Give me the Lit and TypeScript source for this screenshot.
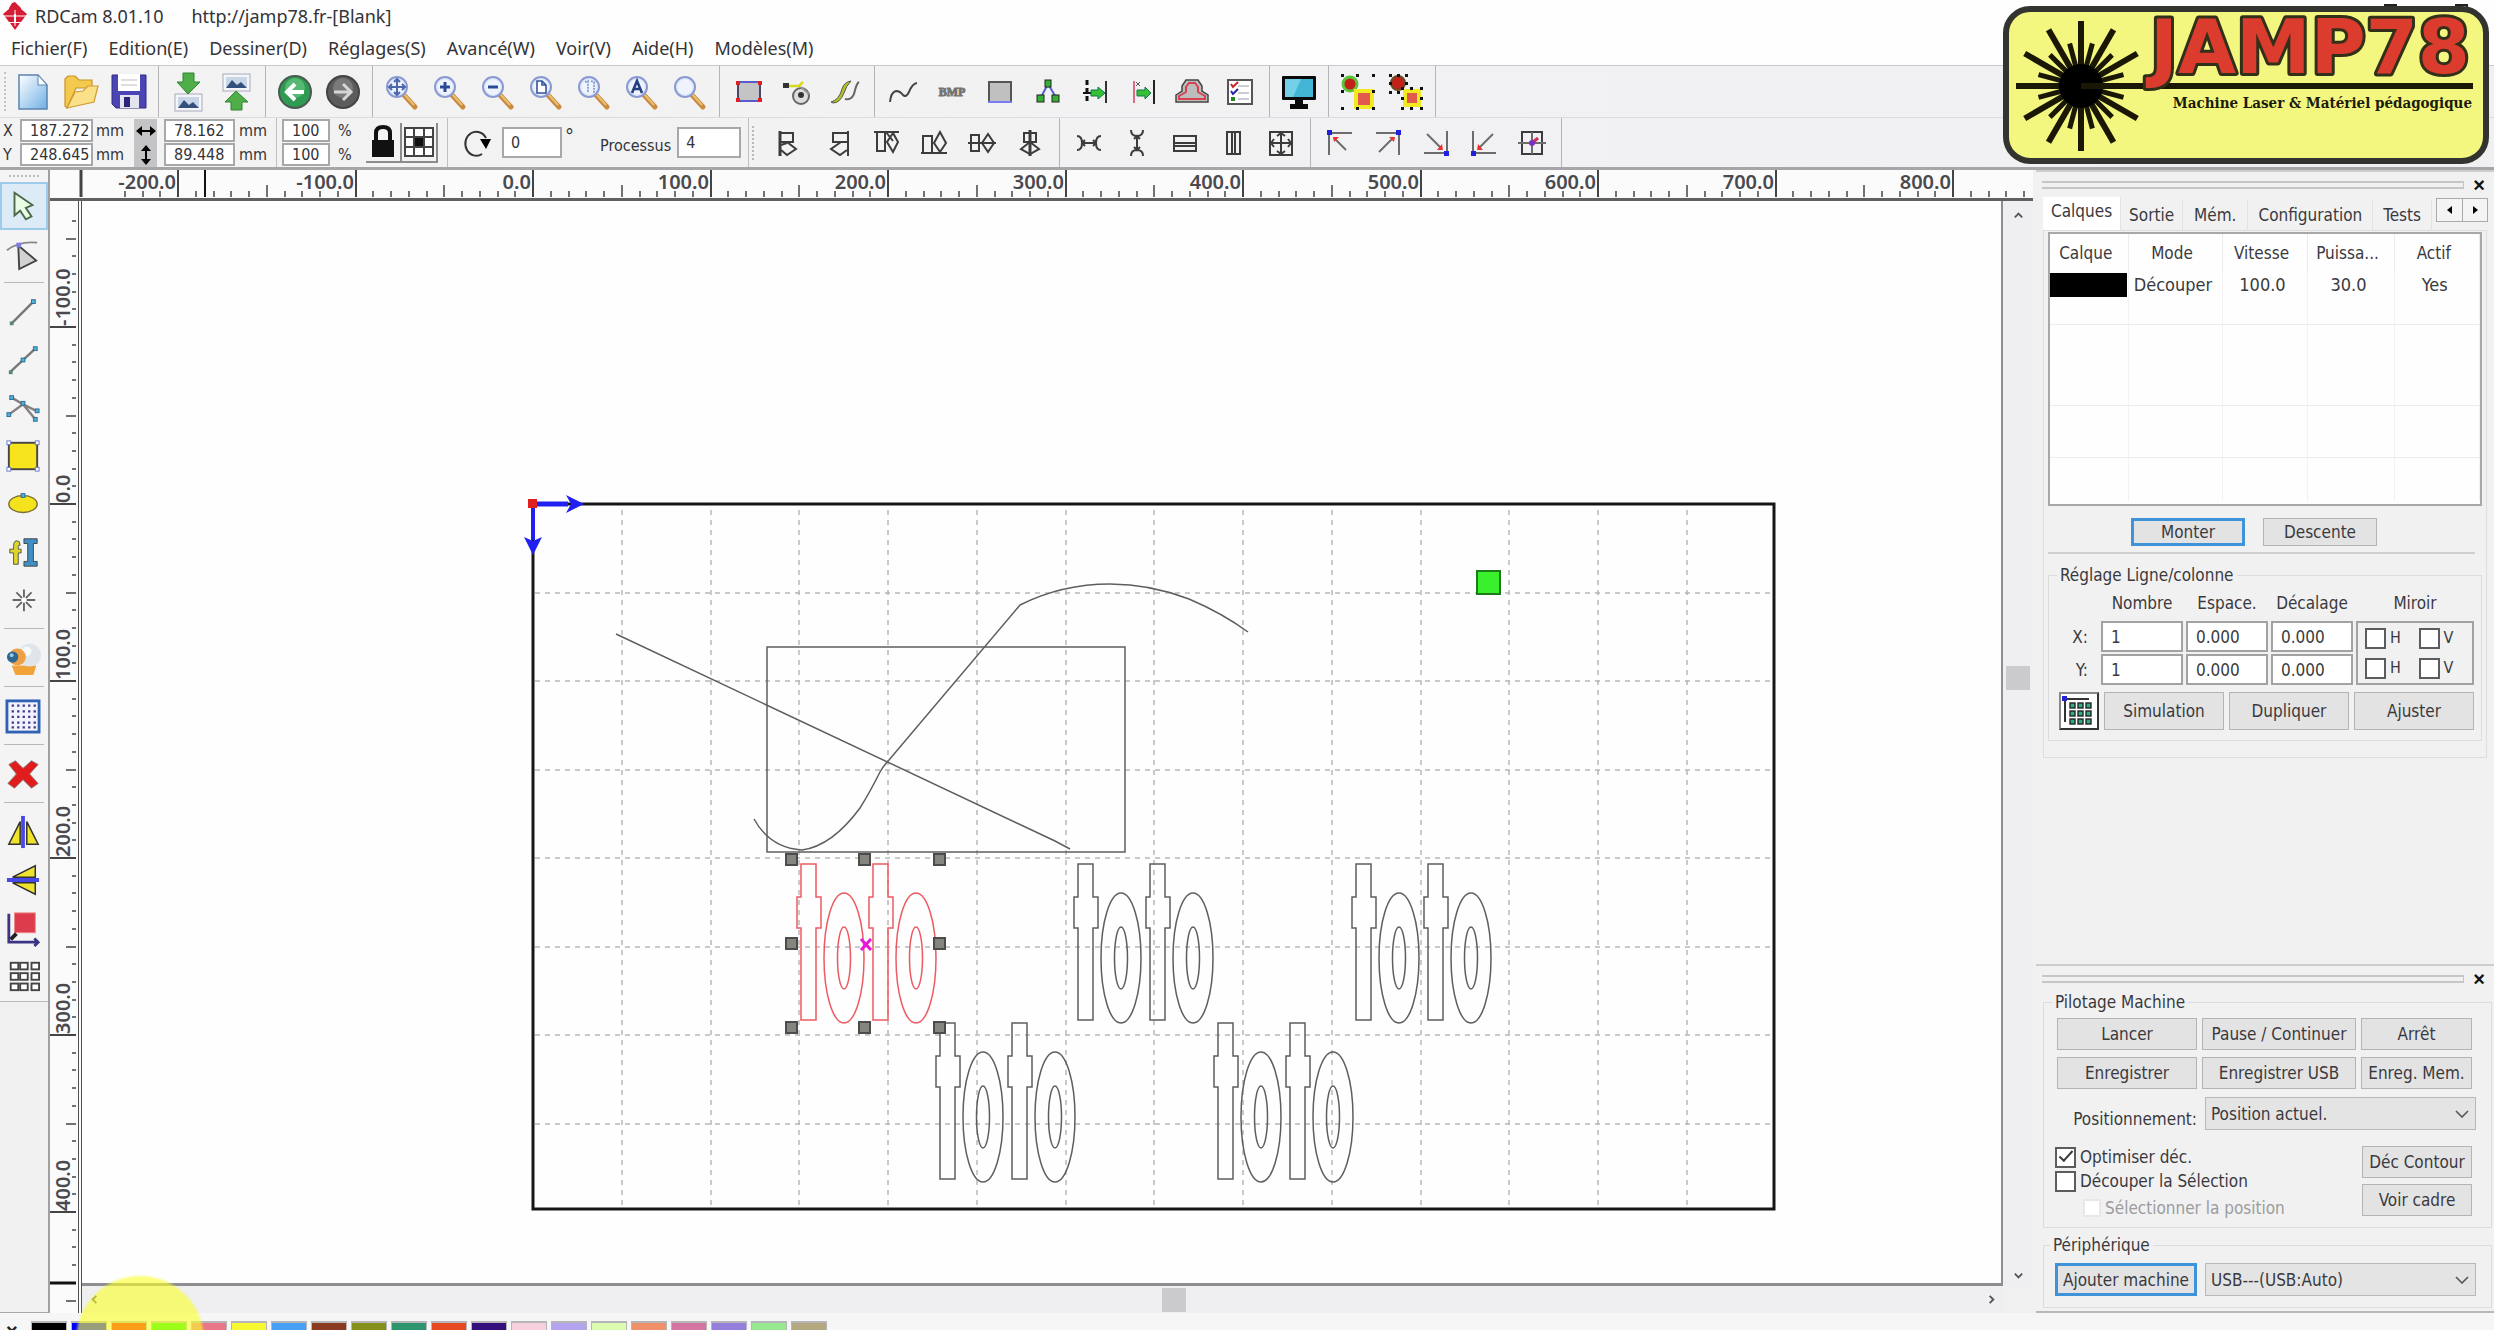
import { LitElement, html, svg, css, nothing } from "lit";
import type { SVGTemplateResult } from "lit";
import { customElement } from "lit/decorators.js";

type Art = SVGTemplateResult;
interface Tool {
  name: string;
  art: Art;
}

const glass = (inner: Art | typeof nothing) => svg`
  <path d="M20 21 L31 33" stroke="#c98a3c" stroke-width="5" stroke-linecap="round"/>
  <path d="M20 20 L30 31" stroke="#e8c07a" stroke-width="2"/>
  <circle cx="13" cy="13" r="10" fill="#dfe8fb" stroke="#8a9ad0" stroke-width="2"/>
  <circle cx="13" cy="13" r="7.5" fill="#eef3fd"/>${inner}`;

const fileTools: Tool[] = [
  {
    name: "Nouveau",
    art: svg`<defs><linearGradient id="pg" x1="0" y1="0" x2="1" y2="1"><stop offset="0" stop-color="#fff"/><stop offset="1" stop-color="#6fb0e6"/></linearGradient></defs>
      <path d="M4 1 H23 L32 11 V35 H4 Z" fill="url(#pg)" stroke="#5b84ad" stroke-width="1.5"/><path d="M23 1 V11 H32 Z" fill="#fff" stroke="#5b84ad"/>`,
  },
  {
    name: "Ouvrir",
    art: svg`<path d="M2 5 L5 2 H12 L16 6 H29 V14 H13 L4 34 L2 32 Z" fill="#f3c94e" stroke="#c8952a" stroke-width="1.2"/>
      <path d="M4 34 L12 18 L20 17 L25 12 H35 L31 28 Z" fill="#fbe08a" stroke="#d09c30" stroke-width="1.2"/>`,
  },
  {
    name: "Enregistrer",
    art: svg`<path d="M1 1 H35 V34 H5 L1 30 Z" fill="#4a44b4" stroke="#302a86"/><rect x="7" y="0" width="22" height="17" fill="#fff"/>
      <path d="M10 6 H26 M10 11 H26" stroke="#bbb"/><rect x="9" y="21" width="19" height="13" fill="#e4e4ee"/><rect x="13" y="23" width="6" height="10" fill="#2a267c"/>`,
  },
];
const photo = (y: number) => svg`<rect x="5" y=${y} width="27" height="17" fill="#f3f5f8" stroke="#aab"/>
  <rect x="8" y=${y + 3} width="21" height="11" fill="#c9d6e8"/><path d=${`M8 ${y + 14} L14 ${y + 6} L19 ${y + 11} L23 ${y + 8} L29 ${y + 14} Z`} fill="#34507c"/>`;
const transferTools: Tool[] = [
  {
    name: "Importer",
    art: svg`${photo(20)}<path d="M13 -1 H24 V8 H30 L18 20 L7 8 H13 Z" fill="#4fae48" stroke="#2f8432"/>`,
  },
  {
    name: "Exporter",
    art: svg`${photo(0)}<path d="M13 36 H24 V28 H30 L18 17 L7 28 H13 Z" fill="#4fae48" stroke="#2f8432"/>`,
  },
];
const historyTools: Tool[] = [
  {
    name: "Annuler",
    art: svg`<circle cx="18" cy="18" r="16" fill="#2f9a51" stroke="#4b5a50" stroke-width="2"/><circle cx="18" cy="14" r="10" fill="#56b873"/>
      <path d="M27 18 H11 M18 10 L10 18 L18 26" fill="none" stroke="#fff" stroke-width="4"/>`,
  },
  {
    name: "Rétablir",
    art: svg`<circle cx="18" cy="18" r="16" fill="#5c5c5c" stroke="#444" stroke-width="2"/><circle cx="18" cy="14" r="10" fill="#7a7a7a"/>
      <path d="M9 18 H25 M18 10 L26 18 L18 26" fill="none" stroke="#d6d6d6" stroke-width="3"/>`,
  },
];
const zoomTools: Tool[] = [
  {
    name: "Déplacer la vue",
    art: glass(svg`<path d="M13 5 V21 M5 13 H21 M10 8 L13 5 L16 8 M10 18 L13 21 L16 18 M8 10 L5 13 L8 16 M18 10 L21 13 L18 16" fill="none" stroke="#4c68ac" stroke-width="2"/>`),
  },
  { name: "Zoom avant", art: glass(svg`<path d="M13 8 V18 M8 13 H18" stroke="#2b4a96" stroke-width="3"/>`) },
  { name: "Zoom arrière", art: glass(svg`<path d="M8 13 H18" stroke="#2b4a96" stroke-width="3"/>`) },
  { name: "Voir la page", art: glass(svg`<path d="M9 7 H14 L18 11 V19 H9 Z M14 7 V11 H18" fill="#fff" stroke="#35539c" stroke-width="1.6"/>`) },
  { name: "Voir les données", art: glass(svg`<path d="M9 8 L12 7 V19 M15 7 L18 8 V19" fill="none" stroke="#8da6cc" stroke-width="2" stroke-dasharray="2 1"/>`) },
  { name: "Tout voir", art: glass(svg`<path d="M8 19 L13 7 L18 19 M10 15 H16" fill="none" stroke="#263f80" stroke-width="2.6"/>`) },
  { name: "Zoom cadre", art: glass(nothing) },
];
const pathTools: Tool[] = [
  {
    name: "Contour",
    art: svg`<rect x="7" y="8" width="22" height="19" fill="#c4c4c4" stroke="#5a5ad0" stroke-width="2"/><path d="M7 25 V10 M29 10 V25" stroke="#444" stroke-width="1.5"/>
      <g fill="#d22"><rect x="5" y="7" width="4" height="4"/><rect x="27" y="7" width="4" height="4"/><rect x="5" y="24" width="4" height="4"/><rect x="27" y="24" width="4" height="4"/></g>`,
  },
  {
    name: "Point de départ",
    art: svg`<circle cx="22" cy="22" r="8" fill="#ddd" stroke="#666" stroke-width="2"/><circle cx="22" cy="21" r="3" fill="#333"/>
      <path d="M9 12 H20 L24 8" fill="none" stroke="#d8d820" stroke-width="2.5"/><rect x="4" y="9" width="6" height="5" fill="#333"/><path d="M22 13 L30 20" stroke="#999" stroke-width="2"/>`,
  },
  {
    name: "Entrée et sortie",
    art: svg`<path d="M4 28 Q12 26 15 15 Q17 8 24 7 Q19 12 17 19 Q13 29 6 29 Z" fill="#b4c41c" stroke="#555"/>
      <path d="M18 25 Q26 27 28 16 Q30 9 32 8" fill="none" stroke="#666" stroke-width="2"/>`,
  },
];
const drawTools: Tool[] = [
  { name: "Lisser", art: svg`<path d="M4 28 Q5 18 10 17 Q14 17 17 21 Q20 24 23 18 Q26 10 31 9" fill="none" stroke="#444" stroke-width="2"/>` },
  { name: "Traiter BMP", art: svg`<text x="18" y="22" text-anchor="middle" class="bmp">BMP</text>` },
  { name: "Fermer", art: svg`<rect x="7" y="8" width="22" height="20" fill="#c0c0c0" stroke="#555" stroke-width="2"/><path d="M6 28 H30" stroke="#7a7af0" stroke-width="2"/>` },
  {
    name: "Trier",
    art: svg`<path d="M18 10 L10 25 M18 10 L27 25" stroke="#5560c8" stroke-width="2"/>
      <g fill="#35b035" stroke="#222"><rect x="15" y="6" width="6" height="7"/><rect x="7" y="21" width="7" height="7"/><rect x="22" y="21" width="7" height="7"/></g>`,
  },
  {
    name: "Intervalle",
    art: svg`<path d="M9 6 V30" stroke="#111" stroke-width="3" stroke-dasharray="5 3"/><path d="M28 7 V29" stroke="#333" stroke-width="2"/>
      <path d="M5 19 H14" stroke="#111" stroke-width="2"/><path d="M13 16 H20 V13 L27 19 L20 25 V22 H13 Z" fill="#35c035" stroke="#174"/>`,
  },
  {
    name: "Décalage",
    art: svg`<path d="M8 7 V29" stroke="#e06a80" stroke-width="2"/><path d="M28 6 V30" stroke="#222" stroke-width="2"/><path d="M10 8 L14 12 M14 8 L10 12" stroke="#555"/>
      <path d="M11 16 H19 V13 L25 19 L19 25 V22 H11 Z" fill="#35c035" stroke="#174"/>`,
  },
  {
    name: "Bande",
    art: svg`<path d="M2 21 L8 17 V12 L12 6 H24 L28 12 V17 L34 21 V28 H2 Z" fill="#bdbdbd" stroke="#444" stroke-width="1.5"/>
      <path d="M5 25 V22 L12 18 V13 L15 9 H21 L24 13 V18 L31 22 V25 Z" fill="none" stroke="#d9404f" stroke-width="2"/>`,
  },
  {
    name: "Vérifier",
    art: svg`<rect x="6" y="6" width="24" height="24" fill="#fff" stroke="#555" stroke-width="2"/><path d="M16 12 H27 M16 19 H27 M16 25 H27" stroke="#99a"/>
      <path d="M9 10 L11 13 L16 8" fill="none" stroke="#c22" stroke-width="2"/><path d="M9 17 L11 20 L16 15" fill="none" stroke="#22a" stroke-width="2"/><rect x="9" y="23" width="4" height="4" fill="#282"/>`,
  },
];
const screenTools: Tool[] = [
  {
    name: "Aperçu",
    art: svg`<rect x="1" y="2" width="34" height="24" rx="1" fill="#0a0a0a"/><rect x="4" y="5" width="28" height="18" fill="#43b6d6"/><path d="M4 5 H20 L12 23 H4 Z" fill="#74d0e6"/>
      <path d="M14 26 H22 V30 H27 V35 H9 V30 H14 Z" fill="#0a0a0a"/>`,
  },
];
const dots = (pts: number[][]) => pts.map(([x, y]) => svg`<rect x=${x} y=${y} width="3" height="3" fill="#111"/>`);
const groupTools: Tool[] = [
  {
    name: "Grouper",
    art: svg`<circle cx="10" cy="10" r="7" fill="#c22018" stroke="#5bc43a" stroke-width="3"/><rect x="16" y="17" width="16" height="16" fill="#e2594e" stroke="#f2ea20" stroke-width="4"/>
      ${dots([[1, 0], [16, 0], [32, 0], [1, 16], [32, 16], [1, 33], [16, 33], [32, 33]])}`,
  },
  {
    name: "Dégrouper",
    art: svg`<circle cx="10" cy="9" r="7" fill="#c22018" stroke="#6a4a28" stroke-width="2"/><rect x="17" y="17" width="14" height="14" fill="#e2594e" stroke="#f2ea20" stroke-width="4"/>
      ${dots([[1, 0], [9, 0], [17, 0], [1, 8], [17, 8], [1, 17], [9, 17], [13, 13], [22, 13], [32, 13], [13, 23], [32, 23], [13, 33], [22, 33], [32, 33]])}`,
  },
];

const alignTools: Tool[] = [
  { name: "Aligner à gauche", art: svg`<path d="M8 6 V31" stroke-width="3"/><path d="M9 8 H21 V17 H9 M15 17 L24 24 L15 30 L9 25" /><path d="M9 20 L15 18"/>` },
  { name: "Aligner à droite", art: svg`<path d="M28 6 V31"/><path d="M27 8 H13 V17 H27 M21 17 L11 24 L20 30 L27 25"/>` },
  { name: "Aligner en haut", art: svg`<path d="M6 7 H31"/><path d="M9 7 V26 H17 V7 M25 8 L19 17 L25 27 L30 17 Z M18 7 L25 16"/>` },
  { name: "Aligner en bas", art: svg`<path d="M5 28 H31"/><path d="M7 28 V11 H16 V28 M24 7 L18 18 L24 27 L30 18 Z"/>` },
  { name: "Centrer horizontalement", art: svg`<path d="M4 18 H32"/><path d="M7 10 H15 V26 H7 Z M24 9 L18 18 L24 27 L30 18 Z"/>` },
  { name: "Centrer verticalement", art: svg`<path d="M18 5 V31" stroke-width="3"/><path d="M12 8 H24 V17 H12 Z M18 17 L27 24 L18 29 L9 24 Z"/>` },
];
const spreadTools: Tool[] = [
  { name: "Espacer en largeur", art: svg`<path d="M6 11 Q11 11 11 18 Q11 25 6 25 M30 11 Q25 11 25 18 Q25 25 30 25 M11 18 H25 M14 15 L11 18 L14 21 M22 15 L25 18 L22 21"/>` },
  { name: "Espacer en hauteur", art: svg`<path d="M12 5 Q12 11 18 11 Q24 11 24 5 M12 31 Q12 25 18 25 Q24 25 24 31 M18 11 V25 M15 14 L18 11 L21 14 M15 22 L18 25 L21 22"/>` },
  { name: "Même largeur", art: svg`<path d="M7 11 H29 V26 H7 Z M7 18 H29 M7 21 H29"/>` },
  { name: "Même hauteur", art: svg`<path d="M12 7 H25 V29 H12 Z M17 7 V29 M20 7 V29"/>` },
  { name: "Même taille", art: svg`<path d="M7 7 H29 V30 H7 Z M7 18 H29 M18 7 V30 M14 11 L18 8 L22 11 M14 26 L18 29 L22 26"/><path d="M11 14 L8 18 L11 22 M25 14 L28 18 L25 22"/>` },
];
const cornerTools: Tool[] = [
  { name: "Coin haut gauche", art: svg`<path d="M7 8 H30 M7 8 V30" class="dim"/><path d="M12 13 L24 25" class="dim"/><path d="M11 12 H17 L12 17 Z" class="red"/><rect x="5" y="5" width="5" height="5" class="blue"/>` },
  { name: "Coin haut droit", art: svg`<path d="M6 8 H29 M29 8 V30" class="dim"/><path d="M23 13 L9 27" class="dim"/><path d="M25 12 H19 L24 17 Z" class="red"/><rect x="26" y="5" width="5" height="5" class="blue"/>` },
  { name: "Coin bas droit", art: svg`<path d="M6 28 H29 M29 6 V28" class="dim"/><path d="M9 9 L23 23" class="dim"/><path d="M25 25 H19 L24 19 Z" class="red"/><rect x="26" y="26" width="5" height="5" class="blue"/>` },
  { name: "Coin bas gauche", art: svg`<path d="M7 28 H30 M7 6 V28" class="dim"/><path d="M27 9 L13 23" class="dim"/><path d="M11 25 H17 L12 19 Z" class="red"/><rect x="5" y="26" width="5" height="5" class="blue"/>` },
  { name: "Centre", art: svg`<path d="M8 7 H28 V29 H8 Z" /><path d="M4 18 H32 M18 7 V29" class="dim"/><path d="M18 18 L24 13" class="rose"/><circle cx="18" cy="18" r="3" class="violet"/>` },
];

const node = (x: number, y: number) => svg`<rect x=${x - 2} y=${y - 2} width="4" height="4" fill="#4fb2e0" stroke="#2c6c92"/>`;
const sideTools: Tool[][] = [
  [
    { name: "Sélection", art: svg`<path d="M9 4 L28 17 L21 20 L27 29 L21 32 L15 23 L9 28 Z" fill="#eafbe6" stroke="#4a6a4a" stroke-width="2"/>` },
    { name: "Éditer les points", art: svg`<path d="M1 14 Q14 4 33 6" fill="none" stroke="#888" stroke-width="2"/><path d="M13 9 L32 25 L14 34 Z" fill="#d2d2d2" stroke="#444" stroke-width="2"/><rect x="11" y="6" width="5" height="5" fill="#7c7ce0"/>` },
  ],
  [
    { name: "Ligne", art: svg`<path d="M6 30 L29 7" stroke="#777" stroke-width="2.5"/><rect x="4" y="28" width="4" height="4" fill="#587"/>${node(29, 7)}` },
    { name: "Polyligne", art: svg`<path d="M4 31 L31 6" stroke="#777" stroke-width="2.5"/>${node(31, 6)}${node(18, 18)}<rect x="3" y="29" width="4" height="4" fill="#587"/>` },
    { name: "Courbe", art: svg`<path d="M6 7 L18 14 L32 21 M3 25 L18 14 L31 30" fill="none" stroke="#887f80" stroke-width="2.5"/>${node(6, 7)}${node(18, 13)}${node(33, 21)}${node(3, 25)}${node(31, 30)}` },
    {
      name: "Rectangle",
      art: svg`<rect x="3" y="4" width="30" height="28" fill="#f7e41c" stroke="#444" stroke-width="2"/>
      <g fill="#fff" stroke="#6a7ac8"><rect x="1" y="2" width="4" height="4"/><rect x="31" y="2" width="4" height="4"/><rect x="1" y="30" width="4" height="4"/><rect x="31" y="30" width="4" height="4"/></g>`,
    },
    { name: "Ellipse", art: svg`<ellipse cx="18" cy="18" rx="15" ry="9" fill="#f4e31c" stroke="#776f30" stroke-width="1.5"/>${node(18, 9)}` },
    {
      name: "Texte",
      art: svg`<path d="M14 7 Q8 4 8 12 V15 H4 V19 H8 V31 H13 V19 H16 V15 H13 V12 Q13 10 15 11 Z" fill="#ddd62a" stroke="#555"/>
      <path d="M19 4 H33 V9 H29 V28 H33 V33 H19 V28 H23 V9 H19 Z" fill="#3e8fc4" stroke="#444"/>`,
    },
    { name: "Point", art: svg`<path d="M19 7 V30 M7 18 H31 M11 10 L27 26 M27 10 L11 26" stroke="#666" stroke-width="2"/><circle cx="19" cy="18" r="3" fill="#fff"/>` },
  ],
  [
    {
      name: "Capture",
      art: svg`<path d="M6 26 H32 L29 36 H10 Z" fill="#f0a338"/><circle cx="25" cy="15" r="12" fill="#dfe5ea"/><circle cx="22" cy="11" r="5" fill="#f6f8fa"/>
      <circle cx="12" cy="17" r="9" fill="#efa044"/><circle cx="7" cy="17" r="6" fill="#2f6790"/><circle cx="6" cy="15" r="2" fill="#9cc8e4"/>`,
    },
  ],
  [
    {
      name: "Trame",
      art: svg`<rect x="1" y="2" width="34" height="33" fill="#f2f2fc" stroke="#2f62b4" stroke-width="3"/>
      ${[7, 13, 19, 25, 30].map((y) => svg`<path d=${`M6 ${y} H32`} stroke="#3c3c86" stroke-width="2.4" stroke-dasharray="2.4 3.4"/>`)}`,
    },
  ],
  [{ name: "Supprimer", art: svg`<path d="M3 8 L10 4 L18 12 L27 4 L34 8 L25 18 L34 28 L27 33 L18 24 L9 33 L2 28 L11 18 Z" fill="#e11c1c" stroke="#8d7c7c" stroke-width="1"/>` }],
  [
    { name: "Miroir horizontal", art: svg`<path d="M15 7 V31 H3 Z M22 7 V31 H34 Z" fill="#efe32c" stroke="#333" stroke-width="1.6"/><path d="M18 1 V35" stroke="#4848e8" stroke-width="4"/>` },
    { name: "Miroir vertical", art: svg`<path d="M31 3 V15 H7 Z M31 33 V21 H7 Z" fill="#efe32c" stroke="#333" stroke-width="1.6"/><path d="M1 18 H35" stroke="#4848e8" stroke-width="4"/>` },
    { name: "Origine", art: svg`<rect x="9" y="2" width="22" height="21" fill="#dc3c4c" stroke="#e88"/><path d="M3 3 V33 H34 M30 29 L34 33 L30 37" fill="none" stroke="#3c3484" stroke-width="3"/><path d="M5 30 L11 24" stroke="#222" stroke-width="4"/>` },
    {
      name: "Réseau",
      art: svg`<g fill="#fff" stroke="#444" stroke-width="2">${[4, 15, 26].map((y) => [5, 15, 27].map((x) => svg`<rect x=${x} y=${y} width="8" height="7"/>`))}</g>`,
    },
  ],
];

const palette = [
  "#000000", "#0000ff", "#ff0000", "#00ff00", "#e87888", "#f8f830", "#48a0f4", "#8a3a1e", "#86901c", "#2e966e",
  "#e64a20", "#36107c", "#f6d0dc", "#b4a4f0", "#dcfcb0", "#f09068", "#d474a0", "#9480dc", "#98e890", "#b4a880",
];

const menus = ["Fichier(F)", "Edition(E)", "Dessiner(D)", "Réglages(S)", "Avancé(W)", "Voir(V)", "Aide(H)", "Modèles(M)"];

const icon = (art: Art) => html`<svg class="ico" viewBox="0 0 36 36" aria-hidden="true">${art}</svg>`;

/* Millimetre to screen conversion of the work area. */
const UNIT_X = 1.775;
const UNIT_Y = 1.77;

@customElement("tool-group")
class ToolGroup extends LitElement {
  static properties = { tools: { attribute: false } };
  declare tools: Tool[];
  static styles = css`
    :host { display: flex; align-items: center; padding: 0 5px; border-right: 1px solid #b4b4b6; }
    button { width: 48px; height: 44px; padding: 0; border: 0; background: none; display: grid; place-items: center; }
    svg { width: 36px; height: 36px; overflow: visible; }
    .bmp { font: bold 12px "Liberation Serif", serif; fill: #666; stroke: #777; stroke-width: 1px; }
    .line { fill: none; stroke: #3c3c3c; stroke-width: 2px; }
    .dim { stroke: #6c6c6c; }
    .red { fill: #ee3030; stroke: none; }
    .blue { fill: #2020e0; stroke: none; }
    .rose { stroke: #d03050; stroke-width: 3px; }
    .violet { fill: #7a30c0; stroke: none; }
  `;
  private get outlined() {
    return this.hasAttribute("outlined");
  }
  render() {
    return this.tools.map(
      (t) => html`<button title=${t.name} aria-label=${t.name}>${icon(svg`<g class=${this.outlined ? "line" : "full"}>${t.art}</g>`)}</button>`,
    );
  }
}

@customElement("brand-plate")
class BrandPlate extends LitElement {
  static styles = css`
    :host { display: block; }
    svg { display: block; width: 486px; height: 158px; }
    .name { font: bold 75px "DejaVu Sans", sans-serif; fill: #dc3c2e; stroke: #33301a; stroke-width: 6px; paint-order: stroke; stroke-linejoin: round; }
    .tag { font: bold 15px "DejaVu Serif Condensed", "DejaVu Serif", serif; fill: #1c1c0c; }
  `;
  render() {
    const ray = (deg: number, len: number, w: number) => {
      const a = (deg * Math.PI) / 180;
      return svg`<line x1="78" y1="80" x2=${78 + Math.cos(a) * len} y2=${80 + Math.sin(a) * len} stroke="#1a1805" stroke-width=${w}/>`;
    };
    return html`<svg viewBox="0 0 486 158" role="img" aria-label="JAMP78 Machine Laser &amp; Matériel pédagogique">
      <rect x="3" y="3" width="480" height="152" rx="24" fill="#f3f780" stroke="#33332f" stroke-width="6"/>
      ${Array.from({ length: 12 }, (_, i) => ray(i * 30, 65, 6))}
      ${Array.from({ length: 12 }, (_, i) => ray(i * 30 + 15, 44, 5))}
      <circle cx="78" cy="80" r="22" fill="#000"/>
      <rect x="78" y="77" width="392" height="6" fill="#1a1805"/>
      <text class="name" x="467" y="67" text-anchor="end">JAMP78</text>
      <text class="tag" x="469" y="102" text-anchor="end">Machine Laser &amp; Matériel pédagogique</text>
    </svg>`;
  }
}

@customElement("ruler-top")
class RulerTop extends LitElement {
  static styles = css`
    :host { display: block; background: #fbfbfc; border-bottom: 3px solid #606062; box-sizing: border-box; }
    svg { display: block; width: 100%; height: 28px; overflow: visible; }
    text { font: 600 20px "Noto Sans", sans-serif; fill: #4a4a4e; text-anchor: end; }
  `;
  render() {
    const zero = 483;
    const marks = [];
    for (let v = -230; v <= 840; v += 10) {
      const x = Math.round(zero + v * UNIT_X);
      const major = v % 100 === 0;
      const mid = v % 50 === 0;
      marks.push(svg`<line x1=${x} x2=${x} y1=${major ? 0 : mid ? 15 : 21} y2="27" stroke="#444" stroke-width=${major ? 2 : 1.5}/>`);
      if (major) marks.push(svg`<text x=${x - 2} y="19">${v.toFixed(1)}</text>`);
    }
    return html`<svg aria-hidden="true">${marks}
      <line x1="31" x2="31" y1="0" y2="27" stroke="#444" stroke-width="3"/><line x1="155" x2="155" y1="0" y2="27" stroke="#111" stroke-width="2"/></svg>`;
  }
}

@customElement("ruler-side")
class RulerSide extends LitElement {
  static styles = css`
    :host { display: block; width: 32px; background: #fbfbfc; border-right: 4px double #505052; box-sizing: border-box; overflow: hidden; }
    svg { display: block; width: 28px; height: 100%; overflow: visible; }
    text { font: 600 20px "Noto Sans", sans-serif; fill: #4a4a4e; }
  `;
  render() {
    const zero = 303;
    const marks = [];
    for (let v = -160; v <= 450; v += 10) {
      const y = Math.round(zero + v * UNIT_Y);
      const major = v % 100 === 0;
      const mid = v % 50 === 0;
      marks.push(svg`<line y1=${y} y2=${y} x1=${major ? 0 : mid ? 16 : 22} x2="26" stroke="#444" stroke-width=${major ? 2 : 1.5}/>`);
      if (major) marks.push(svg`<text transform=${`translate(20 ${y - 1}) rotate(-90)`}>${v.toFixed(1)}</text>`);
    }
    return html`<svg aria-hidden="true">${marks}<line x1="0" x2="26" y1="1082" y2="1082" stroke="#111" stroke-width="3"/></svg>`;
  }
}

@customElement("work-area")
class WorkArea extends LitElement {
  static styles = css`
    :host { display: block; background: #fefefe; overflow: hidden; min-width: 0; min-height: 0; position: relative; }
    svg { display: block; position: absolute; inset: 0; width: 100%; height: 100%; }
    .grid { stroke: #b8b8b8; stroke-width: 1.5px; stroke-dasharray: 5 5; }
    .drawn { fill: none; stroke: #5e5e5e; stroke-width: 1.5px; }
    .picked { fill: none; stroke: #ec5a62; stroke-width: 1.5px; }
    .handle { fill: #85857f; stroke: #4c4c4c; stroke-width: 2px; }
  `;
  private ten(dx: number, dy: number, cls: string) {
    const digit = (x: number) => svg`<g transform=${`translate(${x} 0)`}>
      <path d="M801 864 H816 V897 H821 V928 H816 V1020 H801 V928 H797 V897 H801 Z"/>
      <ellipse cx="844" cy="958" rx="20" ry="65"/><ellipse cx="844" cy="958" rx="6.5" ry="31"/></g>`;
    return svg`<g class=${cls} transform=${`translate(${dx} ${dy})`}>${digit(0)}${digit(72)}</g>`;
  }
  render() {
    const left = 533, top = 504, right = 1774, bottom = 1209;
    const lines = [];
    for (let i = 1; i < 14; i++) {
      const x = Math.round(left + i * 50 * UNIT_X);
      lines.push(svg`<line class="grid" x1=${x} x2=${x} y1=${top + 6} y2=${bottom}/>`);
    }
    for (let i = 1; i < 8; i++) {
      const y = Math.round(top + i * 50 * UNIT_Y);
      lines.push(svg`<line class="grid" x1=${left + 2} x2=${right} y1=${y} y2=${y}/>`);
    }
    return html`<svg role="img" aria-label="Plan de travail"><g transform="translate(-82 -201)">
      ${lines}
      <rect x=${left} y=${top} width=${right - left} height=${bottom - top} fill="none" stroke="#161616" stroke-width="3"/>
      <rect class="drawn" x="767" y="647" width="358" height="205"/>
      <path class="drawn" d="M616 634 L1055 841 L1070 849"/>
      <path class="drawn" d="M754 819 Q770 848 802 850 Q832 846 860 808 Q870 792 880 772 Q884 765 889 760 L1020 605 Q1062 584 1110 584 Q1150 584 1189 599 Q1222 613 1248 632"/>
      ${this.ten(277, 0, "drawn")}${this.ten(555, 0, "drawn")}${this.ten(139, 159, "drawn")}${this.ten(417, 159, "drawn")}${this.ten(0, 0, "picked")}
      ${[859, 943, 1027].map((y) => [792, 865, 940].map((x) => (x === 865 && y === 943 ? nothing : svg`<rect class="handle" x=${x - 6} y=${y - 5} width="11" height="11"/>`)))}
      <path d="M861 939 L871 950 M871 939 L861 950" stroke="#e818d8" stroke-width="3"/>
      <rect x="1477" y="571" width="23" height="23" fill="#38f02c" stroke="#1f7a1a" stroke-width="2"/>
      <path d="M535 504 H568" stroke="#2020f0" stroke-width="5"/><path d="M566 495 L584 504 L566 513 L571 504 Z" fill="#2020f0"/>
      <path d="M533 508 V540" stroke="#2020f0" stroke-width="4"/><path d="M524 537 L533 555 L542 537 L533 541 Z" fill="#2020f0"/>
      <rect x="528" y="499" width="9" height="9" fill="#e02020"/>
    </g></svg>`;
  }
}

@customElement("layer-dock")
class LayerDock extends LitElement {
  static styles = css`
    :host { display: flex; flex-direction: column; width: 461px; box-sizing: border-box; padding-left: 3px; font: 17px/22px "DejaVu Sans Condensed", "Noto Sans", sans-serif; color: #3a3a3e; background: #f1f1f2; }
    button, input, select, table { font: inherit; color: inherit; }
    .dock { border-top: 2px solid #cdcdcf; padding: 0 6px; }
    .grip { display: flex; align-items: center; gap: 6px; height: 25px; }
    .grip i { flex: 1; height: 4px; border: solid #c6c6c8; border-width: 2px 1px 2px 0; }
    .grip button { width: 18px; height: 18px; padding: 0; border: 0; background: none; font: bold 20px/16px "Liberation Sans", sans-serif; color: #111; }
    .tabs { display: flex; align-items: flex-end; height: 33px; padding-left: 1px; }
    .tabs [role="tab"] { height: 30px; padding: 0 11px; border: 0; background: none; border-right: 1px solid #e2e2e2; }
    .tabs [aria-selected="true"] { height: 33px; background: #fff; padding: 0 8px 5px; }
    .tabs .near { padding: 0 8px; }
    .tabs .wide { padding: 0 10px; }
    .tabs .step { width: 26px; height: 24px; padding: 0; border: 1px solid #aaaaac; background: #f4f4f4; align-self: flex-start; margin-top: 1px; display: grid; place-items: center; }
    .tabs .first { margin-left: auto; border-right: 0; }
    .step svg { width: 8px; height: 8px; }
    .panel { border: 1px solid #dededf; padding: 1px 4px 16px 4px; margin: 0 1px; }
    .list { height: 274px; box-sizing: border-box; border: 2px solid #a8a8aa; background: #fefefe; }
    table { width: 100%; border-collapse: collapse; table-layout: fixed; }
    th, td { box-sizing: border-box; }
    th { font-weight: normal; height: 38px; padding: 0 6px 0 0; border-right: 1px solid #ececee; text-align: center; }
    td { height: 26px; padding: 0 4px 0 0; border-right: 1px solid #f2f2f4; text-align: center; white-space: nowrap; font-size: 18px; }
    td.ink { padding: 0 1px 0 0; }
    .c1 { width: 78px; } .c2 { width: 94px; } .c3 { width: 85px; } .c4 { width: 87px; }
    .swatch { display: block; height: 24px; background: #000; }
    .gap td { height: 26px; border-bottom: 1px solid #ececec; }
    .gap.tall td { height: 81px; } .gap.half td { height: 52px; } .gap.last td { height: 44px; border-bottom: 0; }
    .push { padding: 0; border: 1px solid #b4b4b6; background: #e3e3e4; white-space: nowrap; }
    .focus { border: 3px solid #3f93d8; }
    .moves { display: flex; gap: 18px; padding: 12px 0 6px 83px; }
    .moves .push { width: 114px; height: 28px; }
    .moves .push.focus { line-height: 20px; }
    hr { border: 0; border-top: 2px solid #d0d0d2; margin: 0 7px 10px 0; }
    fieldset { margin: 0; border: 1px solid #dcdcde; min-width: 0; }
    legend { padding: 0 3px; margin: 0; }
    .array { padding: 0 7px 10px 10px; }
    .array legend { margin-left: -2px; }
    .cells { display: grid; grid-template-columns: 39px 82px 82px 82px 1fr; grid-template-rows: 34px 33px 33px; gap: 0 3px; align-items: center; text-align: center; }
    .cells .axis { text-align: right; padding-right: 10px; }
    .cells .field { width: 100%; height: 31px; box-sizing: border-box; border: 2px solid #a2a2a4; background: #fff; padding: 0 8px; }
    .mirror { grid-row: 2 / 4; grid-column: 5; display: grid; grid-template-columns: 1fr 1fr; border: 2px solid #a2a2a4; align-self: stretch; margin: 1px 0; padding-left: 7px; align-items: center; font-size: 16px; }
    label { display: flex; align-items: center; gap: 4px; white-space: nowrap; }
    .box { appearance: none; width: 21px; height: 21px; margin: 0; border: 2px solid #5c5c60; background: #fff; display: grid; place-items: center; flex: none; box-sizing: border-box; }
    .box:checked::after { content: ""; width: 12px; height: 5px; border: solid #3a3a3e; border-width: 0 0 2px 2px; transform: rotate(-48deg); margin-top: -5px; }
    .box:disabled { border-color: #e8e8ea; width: 18px; height: 18px; }
    .acts { display: grid; grid-template-columns: 40px 1fr 1fr 1fr; gap: 5px; margin-top: 6px; }
    .acts .push { height: 38px; }
    .origin { border: 2px solid #333; border-top-color: #888; border-left-color: #888; background: #fff; padding: 0; height: 38px; }
    .origin svg { width: 34px; height: 32px; display: block; }
    .fill { flex: 1; }
    .machine .grip { height: 26px; }
    .pilot { padding: 5px 15px 8px 13px; margin: -1px -4px 6px 1px; }
    .pilot legend, .device legend { margin-left: -5px; }
    .runs { display: grid; grid-template-columns: 140px 154px 1fr; gap: 7px 5px; margin-right: 4px; }
    .runs .push, .side .push { height: 32px; }
    .place { display: flex; gap: 8px; margin-top: 8px; }
    .place label { width: 140px; justify-content: flex-end; padding-top: 10px; }
    .pick { flex: 1; display: grid; align-items: center; }
    .pick select { grid-area: 1 / 1; appearance: none; height: 33px; border: 1px solid #b8b8ba; background: #e4e4e5; padding: 0 5px; border-radius: 0; }
    .pick svg { grid-area: 1 / 1; justify-self: end; width: 14px; height: 8px; margin-right: 7px; pointer-events: none; }
    .opts { display: flex; justify-content: space-between; margin: 16px 4px 0 -2px; }
    .ticks { display: grid; gap: 2px; align-content: start; }
    .ticks .sub { margin: 3px 0 0 28px; color: #9c9c9e; }
    .side { display: grid; gap: 6px; width: 110px; align-content: start; }
    .device { padding: 7px 15px 11px 11px; margin: 0 -4px 3px 1px; }
    .line { display: flex; gap: 8px; }
    .line .push { width: 142px; height: 33px; line-height: 20px; }
    .end { border-top: 2px solid #b8b8ba; height: 0; }
  `;
  private chevron = html`<svg viewBox="0 0 14 8" aria-hidden="true"><path d="M1 1 L7 7 L13 1" fill="none" stroke="#555" stroke-width="1.6"/></svg>`;
  private grip() {
    return html`<div class="grip"><i></i><button aria-label="Fermer">×</button></div>`;
  }
  private axis(name: string) {
    return html`<span class="axis">${name}:</span>
      <input class="field" aria-label="Nombre ${name}" value="1" />
      <input class="field" aria-label="Espace ${name}" value="0.000" />
      <input class="field" aria-label="Décalage ${name}" value="0.000" />`;
  }
  render() {
    const blank = (cls: string) => html`<tr class="gap ${cls}"><td></td><td></td><td></td><td></td><td></td></tr>`;
    return html`
      <section class="dock">
        ${this.grip()}
        <div class="tabs" role="tablist">
          <button role="tab" aria-selected="true">Calques</button>
          <button role="tab" class="near">Sortie</button>
          <button role="tab">Mém.</button>
          <button role="tab" class="wide">Configuration</button>
          <button role="tab" class="wide">Tests</button>
          <button class="step first" aria-label="Onglet précédent"><svg viewBox="0 0 8 8"><path d="M6 0 V8 L1 4 Z"/></svg></button>
          <button class="step" aria-label="Onglet suivant"><svg viewBox="0 0 8 8"><path d="M2 0 V8 L7 4 Z"/></svg></button>
        </div>
        <div class="panel">
          <div class="list">
            <table>
              <thead><tr><th class="c1">Calque</th><th class="c2">Mode</th><th class="c3">Vitesse</th><th class="c4">Puissa...</th><th>Actif</th></tr></thead>
              <tbody>
                <tr><td class="ink"><span class="swatch"></span></td><td>Découper</td><td>100.0</td><td>30.0</td><td>Yes</td></tr>
                ${blank("")}${blank("tall")}${blank("half")}${blank("last")}
              </tbody>
            </table>
          </div>
          <div class="moves"><button class="push focus">Monter</button><button class="push">Descente</button></div>
          <hr />
          <fieldset class="array">
            <legend>Réglage Ligne/colonne</legend>
            <div class="cells">
              <span></span><span>Nombre</span><span>Espace.</span><span>Décalage</span><span>Miroir</span>
              ${this.axis("X")}
              <div class="mirror">
                ${["X", "Y"].map((a) => ["H", "V"].map((d) => html`<label><input class="box" type="checkbox" aria-label="Miroir ${a} ${d}" />${d}</label>`))}
              </div>
              ${this.axis("Y")}
            </div>
            <div class="acts">
              <button class="origin" aria-label="Direction du réseau">
                <svg viewBox="0 0 34 32"><path d="M4 4 H28 M4 4 V27" stroke="#333" stroke-width="2"/><rect x="1" y="1" width="5" height="5" fill="#2424d0"/>
                  <g fill="#2fae80" stroke="#222" stroke-width="1.4">${[8, 16, 24].map((y) => [9, 17, 25].map((x) => svg`<rect x=${x} y=${y} width="5" height="5"/>`))}</g></svg>
              </button>
              <button class="push">Simulation</button><button class="push">Dupliquer</button><button class="push">Ajuster</button>
            </div>
          </fieldset>
        </div>
      </section>
      <div class="fill"></div>
      <section class="dock machine">
        ${this.grip()}
        <fieldset class="pilot">
          <legend>Pilotage Machine</legend>
          <div class="runs">
            ${["Lancer", "Pause / Continuer", "Arrêt", "Enregistrer", "Enregistrer USB", "Enreg. Mem."].map((t) => html`<button class="push">${t}</button>`)}
          </div>
          <div class="place">
            <label for="pos">Positionnement:</label>
            <span class="pick"><select id="pos"><option>Position actuel.</option></select>${this.chevron}</span>
          </div>
          <div class="opts">
            <div class="ticks">
              <label><input class="box" type="checkbox" checked />Optimiser déc.</label>
              <label><input class="box" type="checkbox" />Découper la Sélection</label>
              <label class="sub"><input class="box" type="checkbox" disabled />Sélectionner la position</label>
            </div>
            <div class="side"><button class="push">Déc Contour</button><button class="push">Voir cadre</button></div>
          </div>
        </fieldset>
        <fieldset class="device">
          <legend>Périphérique</legend>
          <div class="line">
            <button class="push focus">Ajouter machine</button>
            <span class="pick"><select aria-label="Périphérique"><option>USB---(USB:Auto)</option></select>${this.chevron}</span>
          </div>
        </fieldset>
      </section>
      <div class="end"></div>
    `;
  }
}

@customElement("app-root")
class AppRoot extends LitElement {
  static styles = css`
    :host { display: flex; flex-direction: column; height: 100vh; position: relative; overflow: hidden; background: #f0f0f1; color: #333338; font: 18px/24px "Noto Sans", sans-serif; }
    button, input { font: inherit; color: inherit; }
    .title { display: flex; align-items: center; gap: 28px; height: 32px; padding-left: 2px; background: #fefefe; }
    .app { display: flex; align-items: center; gap: 7px; }
    .app svg { width: 26px; height: 28px; }
    .win { margin: 0 26px 12px auto; display: flex; gap: 58px; }
    .win button { width: 13px; height: 13px; padding: 0; border: 2px solid #222; background: none; }
    .menu { display: flex; gap: 21px; height: 34px; padding: 0 0 1px 11px; align-items: center; background: #fefefe; border-bottom: 1px solid #c8c8ca; box-sizing: border-box; }
    .menu button { border: 0; padding: 0; background: none; }
    .bar { display: flex; align-items: stretch; height: 51px; padding-left: 9px; background: linear-gradient(90deg, #f3f3f3, #f0f0f3); }
    .dotted { border-left: 2px dotted #c4c4c6; margin: 6px -2px 6px -5px; }
    .props { height: 53px; padding-left: 0; border-bottom: 3px solid #a6a6a8; box-sizing: border-box; border-top: 1px solid #dcdcde; font-family: "DejaVu Sans Condensed", "Noto Sans", sans-serif; font-size: 16px; }
    .set { display: flex; align-items: center; border-right: 1px solid #c0c0c2; }
    .size { padding-right: 11px; }
    .ratio { padding-right: 9px; }
    .pair { display: grid; grid-auto-rows: 23px; row-gap: 1px; align-items: center; }
    .pair label, .pair span { line-height: 22px; }
    .xy { grid-template-columns: 14px 73px 27px; column-gap: 3px; padding-left: 3px; }
    .wh { grid-template-columns: 71px 26px; column-gap: 4px; padding-left: 7px; }
    .pc { grid-template-columns: 48px 18px; column-gap: 8px; padding: 0 10px 0 5px; }
    .num { width: 100%; height: 23px; box-sizing: border-box; padding: 0 0 0 8px; border: 2px solid #a8a8aa; background: #fff; min-width: 0; }
    .arrows { display: grid; grid-template-rows: 24px 24px; margin-left: 11px; background: #c4c4c6; width: 23px; place-items: center; }
    .arrows svg { width: 20px; height: 20px; }
    .sq { width: 36px; height: 40px; padding: 0; background: none; border: solid #8c8c8e; border-width: 0 2px 2px 0; display: grid; place-items: center; }
    .sq svg { width: 32px; height: 36px; }
    .rot { padding: 0 7px 0 13px; gap: 11px; }
    .rot svg { width: 30px; height: 30px; }
    .big { width: 60px; height: 31px; box-sizing: border-box; border: 2px solid #a8a8aa; background: #fff; padding: 0 7px; }
    .count { width: 64px; }
    .deg { align-self: flex-start; margin: 6px 15px 0 -8px; font-size: 20px; }
    .proc { padding-top: 6px; margin-right: -5px; white-space: nowrap; }
    .lead { width: 12px; display: flex; align-items: center; }
    .lead i { height: 34px; margin-left: 3px; border-left: 2px dotted #b8b8ba; }
    .main { flex: 1; min-height: 0; display: grid; grid-template-columns: 50px minmax(0, 1fr) 461px; }
    .tools { background: #f0f0f0; border-right: 2px solid #a0a0a2; box-sizing: border-box; border-bottom: 1px solid #a8a8aa; }
    .strip { background: #f4f4f4; padding-bottom: 1px; border-bottom: 1px solid #bcbcc0; }
    .top { height: 12px; display: flex; align-items: center; justify-content: center; }
    .top i { width: 30px; border-top: 2px dotted #bcbcbe; }
    .tools button { display: grid; place-items: center; width: 100%; height: 48px; padding: 0 2px 0 0; border: 0; background: none; }
    .tools .on { background: #dcebf6; outline: 2px solid #9fcbea; outline-offset: -2px; }
    .tools svg { width: 34px; height: 34px; overflow: visible; }
    .sep { height: 1px; background: #b8b8ba; margin: 4px 4px 5px; }
    .work { display: grid; grid-template-columns: 32px minmax(0, 1fr) 30px; grid-template-rows: 31px minmax(0, 1fr) 27px; }
    ruler-top { grid-column: 1 / 4; height: 31px; }
    ruler-side { grid-row: 2 / 4; }
    work-area { border-bottom: 3px solid #8e8e92; border-right: 2px solid #8e8e92; }
    .scroll { display: flex; justify-content: space-between; align-items: center; background: #efeff1; }
    .scroll button { border: 0; padding: 0; background: none; width: 20px; height: 20px; display: grid; place-items: center; }
    .scroll svg { width: 11px; height: 11px; }
    .v { flex-direction: column; padding: 4px 0 1px; }
    .h { padding: 0 2px; }
    .thumb { background: #cbcbcd; width: 24px; height: 24px; }
    .v .lift { flex: 449; } .v .rest { flex: 585; }
    .h .lift { flex: 1054; } .h .rest { flex: 792; }
    .colors { display: flex; gap: 4px; height: 17px; box-sizing: border-box; padding: 8px 0 0 6px; background: #f6f6f7; }
    .colors .none { width: 20px; margin-right: 1px; font: bold 20px/20px "Liberation Sans", sans-serif; color: #222; background: none; padding: 0; border: 0; text-align: left; }
    .colors .ink { width: 36px; height: 24px; padding: 0; border: solid #b6b6b8; border-width: 2px 1px; flex: none; }
    .halo { position: absolute; left: 76px; bottom: -74px; width: 128px; height: 128px; border-radius: 50%; background: rgba(250, 255, 40, 0.62); filter: blur(1px); pointer-events: none; }
    brand-plate { position: absolute; right: 5px; top: 6px; }
  `;
  private arrow(label: string, d: string) {
    return html`<button aria-label=${label}><svg viewBox="0 0 12 12"><path d=${d} fill="none" stroke="#555" stroke-width="2"/></svg></button>`;
  }
  render() {
    return html`
      <header class="title">
        <span class="app"><svg viewBox="0 0 26 28" aria-hidden="true"><g fill="#d41c34"><path d="M10 1 L13 0 L19 6 H7 Z M7 6 H19 V12 H7 Z"/><path d="M1 12 L7 7 V12 H12 V20 H7 Z"/><path d="M25 12 L19 7 V12 H14 V20 H19 Z"/><path d="M8 21 H18 L13 28 Z"/></g><path d="M13 8 V24 M2 14 H24" stroke="#fff" stroke-width="1"/></svg>RDCam 8.01.10</span>
        <span>http://jamp78.fr-[Blank]</span>
        <span class="win"><button aria-label="Agrandir"></button><button aria-label="Quitter"></button></span>
      </header>
      <nav class="menu">${menus.map((m) => html`<button>${m}</button>`)}</nav>
      <div class="bar">
        <span class="dotted"></span>
        ${[fileTools, transferTools, historyTools, zoomTools, pathTools, drawTools, screenTools, groupTools].map((g) => html`<tool-group .tools=${g}></tool-group>`)}
      </div>
      <div class="bar props">
        <div class="set size">
          <div class="pair xy">
            <label for="px">X</label><input id="px" class="num" value="187.272" /><span>mm</span>
            <label for="py">Y</label><input id="py" class="num" value="248.645" /><span>mm</span>
          </div>
          <div class="arrows">
            <svg viewBox="0 0 20 20"><path d="M0 10 L6 5 V9 H14 V5 L20 10 L14 15 V11 H6 V15 Z"/></svg>
            <svg viewBox="0 0 20 20"><path d="M10 0 L15 6 H11 V14 H15 L10 20 L5 14 H9 V6 H5 Z"/></svg>
          </div>
          <div class="pair wh">
            <input class="num" aria-label="Largeur" value="78.162" /><span>mm</span>
            <input class="num" aria-label="Hauteur" value="89.448" /><span>mm</span>
          </div>
        </div>
        <div class="set ratio">
          <div class="pair pc">
            <input class="num" aria-label="Échelle X" value="100" /><span>%</span>
            <input class="num" aria-label="Échelle Y" value="100" /><span>%</span>
          </div>
          <button class="sq" aria-label="Verrouiller les proportions"><svg viewBox="0 0 32 36"><path d="M9 17 V9 Q9 3 16 3 Q23 3 23 9 V17" fill="none" stroke="#111" stroke-width="4"/><rect x="5" y="16" width="22" height="17" fill="#111"/></svg></button>
          <button class="sq" aria-label="Point d'ancrage"><svg viewBox="0 0 32 36"><path d="M2 4 H30 V32 H2 Z M2 13 H30 M2 23 H30 M11 4 V32 M21 4 V32" fill="#fff" stroke="#444" stroke-width="2"/><rect x="12" y="14" width="8" height="8" fill="#111"/></svg></button>
        </div>
        <div class="set rot">
          <svg viewBox="0 0 30 30"><path d="M25 10 A11 12 0 1 0 21 26" fill="none" stroke="#333" stroke-width="2"/><path d="M19 11 H30 L25 21 Z"/></svg>
          <input class="big" aria-label="Rotation" value="0" /><span class="deg">°</span>
          <label class="proc" for="proc">Processus</label><input id="proc" class="big count" value="4" />
        </div>
        <span class="lead"><i></i></span>
        <tool-group outlined .tools=${alignTools}></tool-group>
        <tool-group outlined .tools=${spreadTools}></tool-group>
        <tool-group outlined .tools=${cornerTools}></tool-group>
      </div>
      <main class="main">
        <aside class="tools">
          <div class="strip">
            <div class="top"><i></i></div>
            ${sideTools.map(
              (group, g) => html`${g ? html`<div class="sep"></div>` : nothing}${group.map((t, i) => html`<button class=${g + i ? "off" : "on"} title=${t.name} aria-label=${t.name}>${icon(t.art)}</button>`)}`,
            )}
          </div>
        </aside>
        <div class="work">
          <ruler-top></ruler-top>
          <ruler-side></ruler-side>
          <work-area></work-area>
          <div class="scroll v">${this.arrow("Haut", "M2 8 L6 4 L10 8")}<span class="lift"></span><span class="thumb"></span><span class="rest"></span>${this.arrow("Bas", "M2 4 L6 8 L10 4")}</div>
          <div class="scroll h">${this.arrow("Gauche", "M8 2 L4 6 L8 10")}<span class="lift"></span><span class="thumb"></span><span class="rest"></span>${this.arrow("Droite", "M4 2 L8 6 L4 10")}</div>
        </div>
        <layer-dock></layer-dock>
      </main>
      <footer class="colors">
        <button class="none" aria-label="Aucune couleur">×</button>
        ${palette.map((c) => html`<button class="ink" aria-label=${c} style="background:${c}"></button>`)}
      </footer>
      <div class="halo"></div>
      <brand-plate></brand-plate>
    `;
  }
}
